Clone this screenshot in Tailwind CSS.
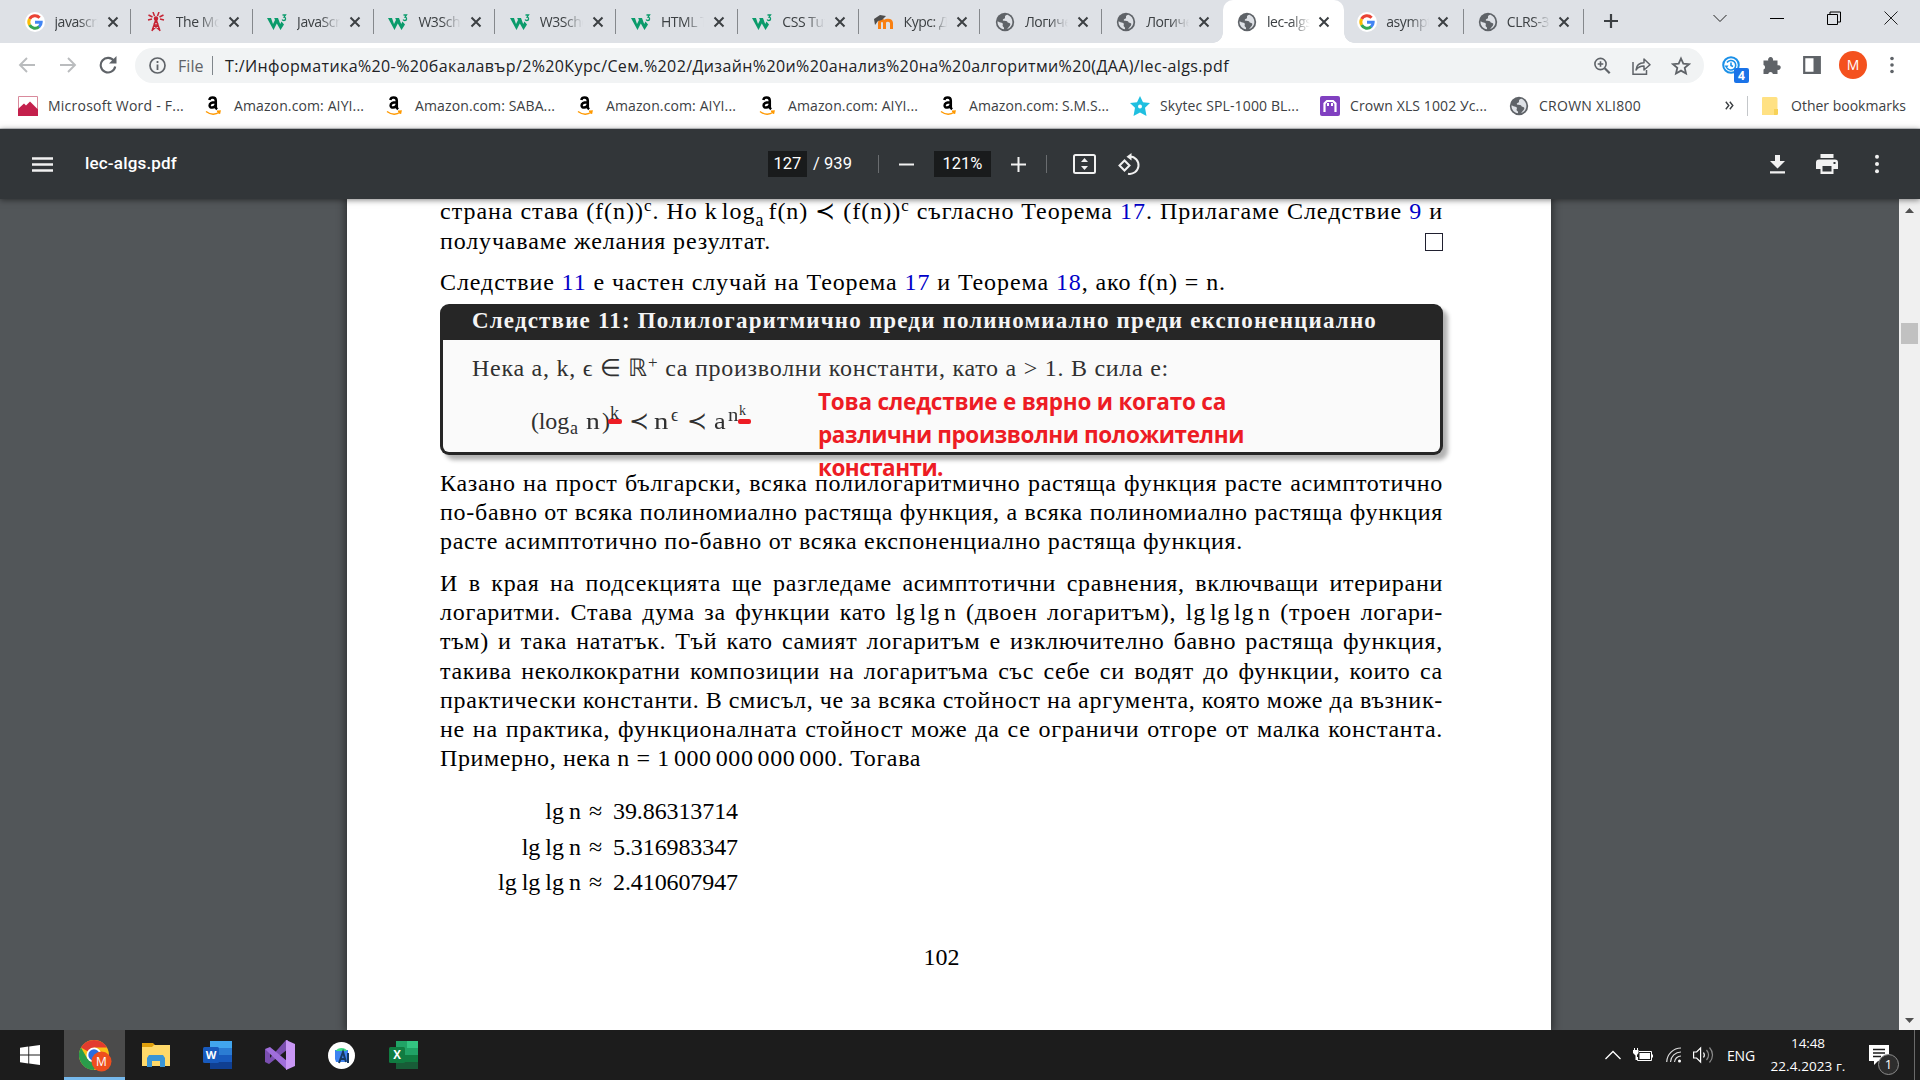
<!DOCTYPE html>
<html lang="bg">
<head>
<meta charset="utf-8">
<title>lec-algs.pdf</title>
<script src="https://cdn.jsdelivr.net/npm/@tailwindcss/browser@4"></script>
</head>
<body class="w-[1920px] h-[1080px] overflow-hidden flex flex-col bg-white font-['Open_Sans','Noto_Sans',sans-serif] text-[#3c4043]">

<svg class="hidden">
  <symbol id="x" viewBox="0 0 12 12"><path d="M1.5 1.5l9 9M10.500 1.500l-9 9" stroke="#3c4043" stroke-width="2" fill="none"/></symbol>
  <symbol id="g" viewBox="0 0 20 20"><circle cx="10" cy="10" r="10" fill="#fff"/><g fill="none" stroke-width="3"><path d="M14.600 5.700A6.200 6.200 0 0 0 4.600 7" stroke="#ea4335"/><path d="M4.600 7a6.300 6.300 0 0 0 0 6" stroke="#fbbc05"/><path d="M4.600 13a6.200 6.200 0 0 0 9.600 1.700" stroke="#34a853"/><path d="M14 14.800c1.500-1.300 2.200-2.800 2.200-4.500H10" stroke="#4285f4"/></g></symbol>
  <symbol id="w3" viewBox="0 0 20 18"><path d="M0 5h4l2 6 2-4-.8-2H11l2.200 6 1.300-2.500 2.500 3L13.500 17 9.800 10.500 6.500 17z" fill="#0a9b6b"/><path d="M15.500 2h3l-1.500 2.200c2.300.2 2 3.300-.2 3.300-.8 0-1.400-.4-1.600-1" stroke="#0a9b6b" stroke-width="1.300" fill="none"/></symbol>
  <symbol id="globe" viewBox="0 0 20 20"><circle cx="10" cy="10" r="9.200" fill="#5f6368"/><path d="M12.500 2.800c-1.500.4-2.800 1-2.500 2.400.2 1-.7 1.500-1.500 1.700-1 .3-1 1.600 0 1.800 1.500.3 3.500-.3 4 1.300.3 1.200 1.500.8 2.300 1.200 1 .5.300 2.500-.6 3.300-.7.700-1.200 2-2.400 2.700 3.300-.8 5.600-3.700 5.600-7.200 0-3.200-2-6-4.900-7.200zM2.700 9.200c1 1 2.500 1.200 3.800 1.500 1.300.3 1.700 1.300 1.200 2.400-.4 1 .3 1.700 1 2.200.5.500.4 1.400.2 2C5.500 16.800 2.500 13.800 2.500 10z" fill="#dee1e6"/></symbol>
  <symbol id="amz" viewBox="0 0 16 20"><path d="M1 15.500c4.500 3.300 9.500 3.300 13.500.5M12 15.200l3-.2-.6 2.800" stroke="#ff9900" stroke-width="1.500" fill="none"/><path d="M10.800 12.500V4.700C10.800 2.500 9.500 1.600 7.600 1.600 5.800 1.600 4.600 2.500 4.300 4M9.900 6.300C6.500 6.300 4.600 7.300 4.600 9.400c0 3.200 5 2.800 6.100-.5M10.500 11c.3 1 1 1.700 1.600 2.200" stroke="#000" stroke-width="2.500" fill="none"/></symbol>
  <symbol id="dots" viewBox="0 0 6 20"><circle cx="3" cy="2.800" r="2"/><circle cx="3" cy="10" r="2"/><circle cx="3" cy="17.200" r="2"/></symbol>
</svg>

<!-- Tab strip -->
<div class="h-[43px] shrink-0 bg-[#dee1e6] flex text-[14px] tracking-[-0.45px] pl-[10px]">
  <div class="w-[121.300px] shrink-0 flex items-center relative pl-[14.500px]"><svg class="w-5 h-5 shrink-0"><use href="#g"/></svg><span class="ml-[10px] w-[43px] overflow-hidden whitespace-nowrap [mask-image:linear-gradient(90deg,#000_55%,transparent)]">javascript</span><svg class="w-3 h-3 ml-[9px] shrink-0"><use href="#x"/></svg><i class="absolute right-0 top-[9px] w-px h-[25px] bg-[#85888c]"></i></div>
  <div class="w-[121.300px] shrink-0 flex items-center relative pl-[14.500px]"><svg class="w-5 h-5 shrink-0" viewBox="0 0 20 20" fill="none" stroke="#c62434" stroke-width="1.500"><path d="M10 7L6 19M10 7l4 12M7.500 13h5M6.500 18l6-5M13.500 18l-6-5M9 8l3 4M11 8l-3 4M2 8l4-1M2.500 3l4 2M7 0l1.500 4M13 0l-1.500 4M17.500 3l-4 2M18 8l-4-1"/><circle cx="10" cy="6.500" r="1.500" fill="#c62434"/></svg><span class="ml-[10px] w-[43px] overflow-hidden whitespace-nowrap [mask-image:linear-gradient(90deg,#000_55%,transparent)]">The Modern</span><svg class="w-3 h-3 ml-[9px] shrink-0"><use href="#x"/></svg><i class="absolute right-0 top-[9px] w-px h-[25px] bg-[#85888c]"></i></div>
  <div class="w-[121.300px] shrink-0 flex items-center relative pl-[14.500px]"><svg class="w-5 h-5 shrink-0"><use href="#w3"/></svg><span class="ml-[10px] w-[43px] overflow-hidden whitespace-nowrap [mask-image:linear-gradient(90deg,#000_55%,transparent)]">JavaScript</span><svg class="w-3 h-3 ml-[9px] shrink-0"><use href="#x"/></svg><i class="absolute right-0 top-[9px] w-px h-[25px] bg-[#85888c]"></i></div>
  <div class="w-[121.300px] shrink-0 flex items-center relative pl-[14.500px]"><svg class="w-5 h-5 shrink-0"><use href="#w3"/></svg><span class="ml-[10px] w-[43px] overflow-hidden whitespace-nowrap [mask-image:linear-gradient(90deg,#000_55%,transparent)]">W3Schools</span><svg class="w-3 h-3 ml-[9px] shrink-0"><use href="#x"/></svg><i class="absolute right-0 top-[9px] w-px h-[25px] bg-[#85888c]"></i></div>
  <div class="w-[121.300px] shrink-0 flex items-center relative pl-[14.500px]"><svg class="w-5 h-5 shrink-0"><use href="#w3"/></svg><span class="ml-[10px] w-[43px] overflow-hidden whitespace-nowrap [mask-image:linear-gradient(90deg,#000_55%,transparent)]">W3Schools</span><svg class="w-3 h-3 ml-[9px] shrink-0"><use href="#x"/></svg><i class="absolute right-0 top-[9px] w-px h-[25px] bg-[#85888c]"></i></div>
  <div class="w-[121.300px] shrink-0 flex items-center relative pl-[14.500px]"><svg class="w-5 h-5 shrink-0"><use href="#w3"/></svg><span class="ml-[10px] w-[43px] overflow-hidden whitespace-nowrap [mask-image:linear-gradient(90deg,#000_55%,transparent)]">HTML T</span><svg class="w-3 h-3 ml-[9px] shrink-0"><use href="#x"/></svg><i class="absolute right-0 top-[9px] w-px h-[25px] bg-[#85888c]"></i></div>
  <div class="w-[121.300px] shrink-0 flex items-center relative pl-[14.500px]"><svg class="w-5 h-5 shrink-0"><use href="#w3"/></svg><span class="ml-[10px] w-[43px] overflow-hidden whitespace-nowrap [mask-image:linear-gradient(90deg,#000_55%,transparent)]">CSS Tutorial</span><svg class="w-3 h-3 ml-[9px] shrink-0"><use href="#x"/></svg><i class="absolute right-0 top-[9px] w-px h-[25px] bg-[#85888c]"></i></div>
  <div class="w-[121.300px] shrink-0 flex items-center relative pl-[14.500px]"><svg class="w-5 h-5 shrink-0" viewBox="0 0 20 20"><path d="M5.500 17V11c0-3.500 5-3.500 5 0v6M10.500 11c0-3.500 6.500-4 7 0v6M5 9l4-1" stroke="#f98012" stroke-width="3" fill="none"/><path d="M0 7l6-4 6 1-4 4-4 1-3 4z" fill="#4d4d4d"/></svg><span class="ml-[10px] w-[43px] overflow-hidden whitespace-nowrap [mask-image:linear-gradient(90deg,#000_65%,transparent)]">Курс: ДАА</span><svg class="w-3 h-3 ml-[9px] shrink-0"><use href="#x"/></svg><i class="absolute right-0 top-[9px] w-px h-[25px] bg-[#85888c]"></i></div>
  <div class="w-[121.300px] shrink-0 flex items-center relative pl-[14.500px]"><svg class="w-5 h-5 shrink-0"><use href="#globe"/></svg><span class="ml-[10px] w-[43px] overflow-hidden whitespace-nowrap [mask-image:linear-gradient(90deg,#000_55%,transparent)]">Логичес</span><svg class="w-3 h-3 ml-[9px] shrink-0"><use href="#x"/></svg><i class="absolute right-0 top-[9px] w-px h-[25px] bg-[#85888c]"></i></div>
  <div class="w-[121.300px] shrink-0 flex items-center relative pl-[14.500px]"><svg class="w-5 h-5 shrink-0"><use href="#globe"/></svg><span class="ml-[10px] w-[43px] overflow-hidden whitespace-nowrap [mask-image:linear-gradient(90deg,#000_55%,transparent)]">Логичес</span><svg class="w-3 h-3 ml-[9px] shrink-0"><use href="#x"/></svg></div>
  <div class="w-[121.300px] shrink-0 flex items-center relative pl-[14px] bg-white rounded-t-[10px]"><i class="absolute -left-[10px] bottom-0 w-[10px] h-[10px] bg-[radial-gradient(circle_at_0_0,#dee1e6_9.500px,#fff_10px)]"></i><i class="absolute -right-[10px] bottom-0 w-[10px] h-[10px] bg-[radial-gradient(circle_at_100%_0,#dee1e6_9.500px,#fff_10px)]"></i><svg class="w-5 h-5 shrink-0"><use href="#globe"/></svg><span class="ml-[10px] w-[43px] overflow-hidden whitespace-nowrap [mask-image:linear-gradient(90deg,#000_55%,transparent)]">lec-algs.pdf</span><svg class="w-3 h-3 ml-[8px] shrink-0"><use href="#x"/></svg></div>
  <div class="w-[119.500px] shrink-0 flex items-center relative pl-[13px]"><svg class="w-5 h-5 shrink-0"><use href="#g"/></svg><span class="ml-[9px] w-[43px] overflow-hidden whitespace-nowrap [mask-image:linear-gradient(90deg,#000_55%,transparent)]">asymptotic</span><svg class="w-3 h-3 ml-[8px] shrink-0"><use href="#x"/></svg><i class="absolute right-0 top-[9px] w-px h-[25px] bg-[#85888c]"></i></div>
  <div class="w-[120px] shrink-0 flex items-center relative pl-[14px]"><svg class="w-5 h-5 shrink-0"><use href="#globe"/></svg><span class="ml-[9px] w-[43px] overflow-hidden whitespace-nowrap [mask-image:linear-gradient(90deg,#000_60%,transparent)]">CLRS-3</span><svg class="w-3 h-3 ml-[8px] shrink-0"><use href="#x"/></svg><i class="absolute right-0 top-[9px] w-px h-[25px] bg-[#85888c]"></i></div>
  <svg class="w-4 h-4 mt-[13px] ml-[19.500px]" viewBox="0 0 16 16"><path d="M8 1v14M1 8h14" stroke="#3c4043" stroke-width="2.200"/></svg>
  <div class="ml-auto mr-[22px] mt-[11px] flex text-black">
    <svg class="w-[14px] h-[14px] mr-[43px]" viewBox="0 0 14 14" fill="none" stroke="#222"><path d="M.5 4L7 10.500 13.500 4"/></svg>
    <svg class="w-[14px] h-[14px] mr-[43px]" viewBox="0 0 14 14" fill="none" stroke="#000"><path d="M0 7.500h14"/></svg>
    <svg class="w-[14px] h-[14px] mr-[43px]" viewBox="0 0 14 14" fill="none" stroke="#000"><path d="M.5 3.500h10v10H.5zM3 3V1h10.500v10H11"/></svg>
    <svg class="w-[14px] h-[14px]" viewBox="0 0 14 14" fill="none" stroke="#222"><path d="M.5.5l13 13M13.500.5l-13 13"/></svg>
  </div>
</div>

<!-- Toolbar -->
<div class="h-[47px] shrink-0 flex pl-[18px]">
  <svg class="w-[18px] h-[18px] mt-[13px]" viewBox="0 0 18 18" fill="none" stroke="#babcbe" stroke-width="1.900"><path d="M17 9H2M9 2L2 9l7 7"/></svg>
  <svg class="w-[18px] h-[18px] mt-[13px] ml-[23px]" viewBox="0 0 18 18" fill="none" stroke="#babcbe" stroke-width="1.900"><path d="M1 9h15M9 2l7 7-7 7"/></svg>
  <svg class="w-[18px] h-[18px] mt-[13px] ml-[22px]" viewBox="0 0 18 18"><path d="M15 5A7.300 7.300 0 1 0 16.200 10.500" fill="none" stroke="#5f6368" stroke-width="2.100"/><path d="M17.500 0v7.500H10z" fill="#5f6368"/></svg>
  <div class="ml-[18px] mt-[5px] h-[35px] w-[1569px] rounded-full bg-[#f1f3f4] flex items-center pl-[14px] text-[16px] relative">
    <svg class="w-[17px] h-[17px]" viewBox="0 0 17 17"><circle cx="8.500" cy="8.500" r="7.500" fill="none" stroke="#5f6368" stroke-width="1.700"/><path d="M8.500 7.500V13M8.500 4v2" stroke="#5f6368" stroke-width="1.800"/></svg>
    <span class="ml-[12px] w-[26px] text-[#5f6368]"><span class="inline-block whitespace-nowrap" data-w="25.500">File</span></span>
    <i class="w-px h-[19px] bg-[#80868b] ml-[8px] mr-[12px]"></i>
    <span class="inline-block whitespace-nowrap text-[#202124]" data-w="1004">T:/Информатика%20-%20бакалавър/2%20Курс/Сем.%202/Дизайн%20и%20анализ%20на%20алгоритми%20(ДАА)/lec-algs.pdf</span>
    <div class="ml-auto mr-[13px] flex gap-[20px] items-center">
      <svg class="w-[18px] h-[18px]" viewBox="0 0 18 18" fill="none" stroke="#5f6368" stroke-width="1.600"><circle cx="7.500" cy="7" r="5.600"/><path d="M11.700 11.200l5 5" stroke-width="2.200"/><path d="M7.500 4.200v5.600M4.700 7h5.600"/></svg>
      <svg class="w-5 h-5" viewBox="0 0 20 20" fill="none" stroke="#5f6368" stroke-width="1.500"><path d="M2 6v12.200h13.500V14"/><path d="M5 14c.5-5 3.500-7.200 8-7.200V3l6 5.700-6 5.300v-4c-3.500 0-6 1-8 4z" stroke-linejoin="round"/></svg>
      <svg class="w-5 h-5" viewBox="0 0 20 20" fill="none" stroke="#5f6368" stroke-width="1.800"><path d="M10 2.500l2.300 5.200 5.700.5-4.300 3.700 1.300 5.600L10 14.600l-5 2.900 1.300-5.600L2 8.200l5.700-.5z"/></svg>
    </div>
  </div>
  <div class="ml-[18px] mt-[13px] w-[28px] relative">
    <svg class="w-[18px] h-[18px]" viewBox="0 0 18 18" fill="none" stroke="#1a90e8" stroke-width="2"><circle cx="9" cy="9" r="7.800"/><path d="M5 6.500A4.800 4.800 0 1 1 5 12M9 6.500V9.500l2 1" stroke-width="1.600"/><path d="M2.500 9.500h4l-2 3z" fill="#1a90e8" stroke="none"/></svg>
    <span class="absolute left-[12px] top-[12px] w-[15px] h-[15px] rounded-[2px] bg-[#1a73e8] text-white text-[12px] leading-[15px] text-center font-bold">4</span>
  </div>
  <svg class="w-5 h-5 mt-[12px] ml-[12px]" viewBox="0 0 20 20" fill="#5f6368"><path d="M1.500 5.500h4.800a2.500 2.500 0 1 1 4.600 0h4.600v4.800a2.400 2.400 0 1 1 0 4.500V19h-4.600a2.400 2.400 0 0 0-4.700 0H1.500v-4.600a2.400 2.400 0 0 0 0-4.500z"/></svg>
  <svg class="w-[18px] h-[18px] mt-[13px] ml-[21px]" viewBox="0 0 18 18"><path d="M1.200 1.200h15.600v15.600H1.200z" fill="#fff" stroke="#5f6368" stroke-width="2.200"/><path d="M10.500 1H17v16h-6.500z" fill="#5f6368"/></svg>
  <div class="ml-[18px] mt-[8px] w-7 h-7 rounded-full bg-[#f4511e] text-white text-[14px] leading-7 text-center">M</div>
  <svg class="w-[6px] h-[18px] mt-[13px] ml-[22px]" fill="#5f6368"><use href="#dots"/></svg>
</div>

<!-- Bookmarks -->
<div class="h-[39px] shrink-0 flex pl-[18px] text-[14px] border-b border-[#cfd1d4] pb-[7px]">
  <div class="w-[187px] shrink-0 flex items-center"><svg class="w-5 h-5" viewBox="0 0 20 20"><path d="M.5.500h19v19H.500z" fill="#fff" stroke="#d98a9c"/><path d="M0 13l6-5.500 2 2 4-4 8 8V20H0z" fill="#c4204c"/></svg><span class="ml-[10px] inline-block whitespace-nowrap" data-w="136">Microsoft Word - F...</span></div>
  <div class="w-[181px] shrink-0 flex items-center"><svg class="w-4 h-5"><use href="#amz"/></svg><span class="ml-[13px] inline-block whitespace-nowrap" data-w="130">Amazon.com: AIYI...</span></div>
  <div class="w-[191px] shrink-0 flex items-center"><svg class="w-4 h-5"><use href="#amz"/></svg><span class="ml-[13px] inline-block whitespace-nowrap" data-w="140">Amazon.com: SABA...</span></div>
  <div class="w-[182px] shrink-0 flex items-center"><svg class="w-4 h-5"><use href="#amz"/></svg><span class="ml-[13px] inline-block whitespace-nowrap" data-w="130">Amazon.com: AIYI...</span></div>
  <div class="w-[181px] shrink-0 flex items-center"><svg class="w-4 h-5"><use href="#amz"/></svg><span class="ml-[13px] inline-block whitespace-nowrap" data-w="130">Amazon.com: AIYI...</span></div>
  <div class="w-[190px] shrink-0 flex items-center"><svg class="w-4 h-5"><use href="#amz"/></svg><span class="ml-[13px] inline-block whitespace-nowrap" data-w="140">Amazon.com: S.M.S...</span></div>
  <div class="w-[190px] shrink-0 flex items-center"><svg class="w-5 h-5" viewBox="0 0 20 20"><path d="M10 0l3 6.200 7 .8-5 4.800L16.500 20 10 16.500 3.500 20 5 11.800 0 7l7-.8z" fill="#1fbfe0"/><circle cx="10" cy="10.500" r="2" fill="#fff"/></svg><span class="ml-[10px] inline-block whitespace-nowrap" data-w="139">Skytec SPL-1000 BL...</span></div>
  <div class="w-[189px] shrink-0 flex items-center"><svg class="w-5 h-5" viewBox="0 0 20 20"><rect width="20" height="20" rx="2" fill="#8040c0"/><path d="M4.500 16V7.500L7 5h6l2.500 2.500V16" stroke="#fff" stroke-width="2.200" fill="none"/><path d="M8 7v3M12 7v3" stroke="#fff" stroke-width="2"/></svg><span class="ml-[10px] inline-block whitespace-nowrap" data-w="137">Crown XLS 1002 Ус...</span></div>
  <div class="w-[216px] shrink-0 flex items-center"><svg class="w-5 h-5"><use href="#globe"/></svg><span class="ml-[10px] inline-block whitespace-nowrap" data-w="102">CROWN XLI800</span></div>
  <div class="flex items-center"><svg class="w-[9px] h-[9px]" viewBox="0 0 9 9" fill="none" stroke="#3c4043" stroke-width="1.400"><path d="M.8.8l3 3.700-3 3.700M4.800.8l3 3.700-3 3.700"/></svg><i class="w-px h-5 bg-[#c4c7ca] ml-[13px] mr-[14px]"></i><svg class="w-[17px] h-[18px]" viewBox="0 0 17 18"><path d="M1 0h13a1.500 1.500 0 0 1 1.500 1.500V18H0V1a1 1 0 0 1 1-1z" fill="#ffe183"/><path d="M12 12h4v5l-1 1h-3z" fill="#f7d257"/></svg><span class="ml-[12px] inline-block whitespace-nowrap" data-w="115">Other bookmarks</span></div>
</div>

<!-- PDF viewer toolbar -->
<div class="h-[70px] shrink-0 bg-[#323639] flex items-center text-white font-[Roboto] text-[16.500px] relative z-10 shadow-[0_1px_6px_rgba(0,0,0,0.500)] pl-[32px]">
  <svg class="w-[21px] h-[15px]" viewBox="0 0 21 15" stroke="#f1f1f1" stroke-width="2.400"><path d="M0 1.500h21M0 7.500h21M0 13.500h21"/></svg>
  <div class="ml-[32px] w-[683px] font-medium text-[17px]"><span class="inline-block whitespace-nowrap" data-w="92">lec-algs.pdf</span></div>
  <div class="w-[39px] h-[26px] bg-[#191b1c] leading-[26px] text-center">127</div>
  <div class="ml-[6px] w-[65px]"><span class="inline-block whitespace-nowrap" data-w="39">/ 939</span></div>
  <i class="w-px h-[18px] bg-[#6a6d70]"></i>
  <svg class="w-[15px] h-[15px] ml-[20px]" viewBox="0 0 15 15" stroke="#f1f1f1" stroke-width="2"><path d="M0 7.500h15"/></svg>
  <div class="w-[57px] h-[26px] bg-[#191b1c] leading-[26px] text-center ml-[20px]">121%</div>
  <svg class="w-[15px] h-[15px] ml-[20px]" viewBox="0 0 15 15" stroke="#f1f1f1" stroke-width="2"><path d="M0 7.500h15M7.500 0v15"/></svg>
  <i class="w-px h-[18px] bg-[#6a6d70] ml-[20px]"></i>
  <svg class="w-[23px] h-[20px] ml-[26px]" viewBox="0 0 23 20"><rect x="1" y="1" width="21" height="18" rx="1.500" fill="none" stroke="#f1f1f1" stroke-width="2"/><path d="M11.500 4l3.500 4H8zM11.500 16l3.500-4H8z" fill="#f1f1f1"/></svg>
  <svg class="w-[23px] h-[23px] ml-[22px]" viewBox="0 0 23 23" fill="none" stroke="#f1f1f1" stroke-width="2"><path d="M6.500 7.500L1.500 12.500 6.500 17.500l5-5zM12 3.500a8.700 8.700 0 1 1-2 17.200"/><path d="M13.500 0v7.500L8.500 3.700z" fill="#f1f1f1" stroke="none"/></svg>
  <div class="ml-auto mr-[40px] flex items-center">
    <svg class="w-[15px] h-[19px]" viewBox="0 0 15 19" fill="#f1f1f1"><path d="M5 0h5v6h5l-7.500 7.500L0 6h5zM0 16.200h15V18.500H0z"/></svg>
    <svg class="w-[22px] h-[20px] ml-[31px] mr-[36px]" viewBox="0 0 22 20"><path d="M4.500 0h13v4h-13zM3 5.500h16a3 3 0 0 1 3 3V15h-4.500v5h-13v-5H0V8.500a3 3 0 0 1 3-3z" fill="#f1f1f1"/><path d="M6.500 12h9v5.500h-9zM17.500 8h2v2h-2z" fill="#323639"/></svg>
    <svg class="w-[6px] h-[20px]" fill="#f1f1f1"><use href="#dots"/></svg>
  </div>
</div>

<!-- Document -->
<main class="h-[831px] shrink-0 bg-[#525659] flex overflow-hidden">
  <div class="ml-[347px] w-[1204px] h-[831px] bg-white shadow-[0_0_8px_2px_rgba(0,0,0,0.450)] pl-[93px] font-['Liberation_Serif',serif] text-[24px] leading-[29.200px] text-black whitespace-nowrap overflow-hidden relative">
    <div class="-mt-[1.600px] h-[30px]"><span class="inline-block" data-w="1003">страна става (f(n))<span class="text-[17px] leading-0 align-[8px]">c</span>. Но k<span class="ml-1">log</span><span class="text-[18px] leading-0 align-[-7px] mr-1">a</span>f(n) ≺ (f(n))<span class="text-[17px] leading-0 align-[8px]">c</span> съгласно Теорема <span class="text-[#0000c8]">17</span>. Прилагаме Следствие <span class="text-[#0000c8]">9</span> и</span></div>
    <div class="h-[29.200px] flex w-[1003px] justify-between"><span class="inline-block" data-w="331">получаваме желания резултат.</span><i class="w-[18px] h-[18px] border border-[#202030] mt-[6px]"></i></div>
    <div class="mt-[11.200px] h-[29.200px]"><span class="inline-block" data-w="786">Следствие <span class="text-[#0000c8]">11</span> е частен случай на Теорема <span class="text-[#0000c8]">17</span> и Теорема <span class="text-[#0000c8]">18</span>, ако f(n) = n.</span></div>
    <section class="mt-[7px] w-[1003px] h-[151px] rounded-[9px] bg-[#262626] shadow-[5px_5px_4px_rgba(0,0,0,0.300)] flex flex-col pb-[3px] px-[3px]">
      <h2 class="h-[36.500px] pl-[29px] text-[23px] leading-[34px] font-bold text-[#f5f5f5]"><span class="inline-block" data-w="905">Следствие 11: Полилогаритмично преди полиномиално преди експоненциално</span></h2>
      <div class="flex-1 bg-[#fafafa] rounded-b-[6px] pl-[29px] pt-[13.500px] text-[#303030]">
        <p class="h-[53.300px]"><span class="inline-block" data-w="697">Нека a, k, ϵ ∈ ℝ<span class="text-[17px] leading-0 align-[8px]">+</span> са произволни константи, като a &gt; 1. В сила е:</span></p>
        <p class="pl-[59px] flex h-[29.200px]"><span class="w-[39px] shrink-0 inline-block"><span class="inline-block" data-w="38">(log</span></span><span class="text-[18px] w-[16px] mt-[7px]">a</span><span class="w-[16px] scale-x-115 origin-left">n</span><span class="w-[8px]">)</span><span class="w-[19px] text-[18px] relative -top-[8px]">k<i class="absolute -left-[2px] top-[20px] w-[14px] h-[5px] rounded-[2px] bg-[#ed1c24]"></i></span><span class="w-[25px]">≺</span><span class="w-[17px] scale-x-120 origin-left">n</span><span class="w-[16px] text-[18px] relative -top-[6px]">ϵ</span><span class="w-[27px]">≺</span><span class="w-[14px] scale-x-110 origin-left">a</span><span class="w-[11px] text-[18px] relative -top-[6px] scale-x-115 origin-left">n</span><span class="text-[14px] relative -top-[11px]">k<i class="absolute -left-[1px] top-[23px] w-[13px] h-[5px] rounded-[2px] bg-[#ed1c24]"></i></span></p>
      </div>
    </section>
    <div class="mt-[14.100px]">
      <p class="h-[29.200px]"><span class="inline-block" data-j="1003">Казано на прост български, всяка полилогаритмично растяща функция расте асимптотично</span></p>
      <p class="h-[29.200px]"><span class="inline-block" data-j="1003">по-бавно от всяка полиномиално растяща функция, а всяка полиномиално растяща функция</span></p>
      <p class="h-[29.200px]"><span class="inline-block" data-w="803" id="measure">расте асимптотично по-бавно от всяка експоненциално растяща функция.</span></p>
    </div>
    <div class="mt-[12.400px]">
      <p class="h-[29.200px]"><span class="inline-block" data-j="1003">И в края на подсекцията ще разгледаме асимптотични сравнения, включващи итерирани</span></p>
      <p class="h-[29.200px]"><span class="inline-block" data-j="1003">логаритми. Става дума за функции като lg<span class="ml-1">lg</span><span class="ml-1">n</span> (двоен логаритъм), lg<span class="ml-1">lg</span><span class="ml-1">lg</span><span class="ml-1">n</span> (троен логари-</span></p>
      <p class="h-[29.200px]"><span class="inline-block" data-j="1003">тъм) и така нататък. Тъй като самият логаритъм е изключително бавно растяща функция,</span></p>
      <p class="h-[29.200px]"><span class="inline-block" data-j="1003">такива неколкократни композиции на логаритъма със себе си водят до функции, които са</span></p>
      <p class="h-[29.200px]"><span class="inline-block" data-j="1003">практически константи. В смисъл, че за всяка стойност на аргумента, която може да възник-</span></p>
      <p class="h-[29.200px]"><span class="inline-block" data-j="1003">не на практика, функционалната стойност може да се ограничи отгоре от малка константа.</span></p>
      <p class="h-[29.200px]"><span class="inline-block" data-w="481">Примерно, нека n = 1<span class="ml-1">000</span><span class="ml-1">000</span><span class="ml-1">000</span><span class="ml-1">000</span>. Тогава</span></p>
    </div>
    <div class="mt-[24px] grid grid-cols-[141px_32px_auto] auto-rows-[35.300px]">
      <span class="text-right">lg<span class="ml-[5px]">n</span></span><span class="pl-[8px]">≈</span><span><span class="inline-block" data-w="125">39.86313714</span></span>
      <span class="text-right">lg<span class="ml-[5px]">lg</span><span class="ml-[5px]">n</span></span><span class="pl-[8px]">≈</span><span><span class="inline-block" data-w="125">5.316983347</span></span>
      <span class="text-right">lg<span class="ml-[5px]">lg</span><span class="ml-[5px]">lg</span><span class="ml-[5px]">n</span></span><span class="pl-[8px]">≈</span><span><span class="inline-block" data-w="125">2.410607947</span></span>
    </div>
    <div class="mt-[40px] w-[1003px] text-center">102</div>
    <div class="absolute left-[471px] top-[186px] font-['Open_Sans','Noto_Sans',sans-serif] font-bold text-[22.500px] leading-[33.200px] text-[#ed1c24]"><span class="inline-block" data-w="408">Това следствие е вярно и когато са</span><br><span class="inline-block" data-w="426">различни произволни положителни</span><br><span class="inline-block" data-w="125">константи.</span></div>
  </div>
  <div class="ml-auto w-[21px] bg-[#f0f0f0] flex flex-col items-center justify-between pt-[9px] pb-[7px] relative">
    <svg class="w-[9px] h-[5px]" viewBox="0 0 9 5"><path d="M0 5L4.500 0 9 5z" fill="#505050"/></svg>
    <i class="absolute left-[2px] top-[124px] w-[17px] h-[21px] bg-[#c1c1c1]"></i>
    <svg class="w-[9px] h-[5px]" viewBox="0 0 9 5"><path d="M0 0l4.500 5L9 0z" fill="#505050"/></svg>
  </div>
</main>

<!-- Taskbar -->
<footer class="h-[50px] shrink-0 bg-[#1c1c1c] flex items-center text-white">
  <svg class="w-5 h-5 ml-[20px]" viewBox="0 0 20 20" fill="#fff"><path d="M0 2.800L8.300 1.600V9.500H0zM9.200 1.500L20 0v9.500H9.200zM0 10.400h8.300v8L0 17.300zM9.200 10.400H20V20L9.200 18.500z"/></svg>
  <div class="ml-[24px] w-[61px] h-[50px] bg-[#4b4b4b] border-b-[3px] border-[#76b9ed] flex pl-[15px] pt-[9px]">
    <svg class="w-[33px] h-[33px]" viewBox="0 0 33 33"><circle cx="15" cy="16" r="15" fill="#fbc116"/><path d="M15 16L2 8.500A15 15 0 0 1 28 8.500H15z" fill="#e33b2e"/><path d="M2 8.500A15 15 0 0 0 15 31l6.500-11-6.500-4-6.500 4z" fill="#2a9d4b"/><circle cx="15" cy="16" r="7.500" fill="#fff"/><circle cx="15" cy="16" r="5.700" fill="#2b6de0"/><circle cx="22.500" cy="22.500" r="10" fill="#ee4e1e"/><text x="22.500" y="27" font-size="12" fill="#fff" text-anchor="middle">M</text></svg>
  </div>
  <svg class="w-7 h-6 ml-[17px]" viewBox="0 0 28 24"><path d="M0 0h11l2 2v3H0z" fill="#e0a00c"/><path d="M0 4h10l2-2h16v21H0z" fill="#ffd969"/><path d="M5 24V15l2-3h14l2 3v9h-5v-6h-8v6z" fill="#3a95d6"/></svg>
  <svg class="w-[29px] h-[28px] ml-[33px]" viewBox="0 0 29 28"><path d="M7 0h22v7H7z" fill="#41a5ee"/><path d="M7 7h22v7H7z" fill="#2b7cd3"/><path d="M7 14h22v7H7z" fill="#185abd"/><path d="M7 21h22v7H7z" fill="#103f91"/><rect y="6" width="16" height="16" rx="1.500" fill="#185abd"/><text x="8" y="18" font-size="11" font-weight="700" fill="#fff" text-anchor="middle">W</text></svg>
  <svg class="w-[30px] h-[30px] ml-[33px]" viewBox="0 0 30 30"><path d="M0 9v13l4 2L23 9V0h-2L5 18V11z" fill="#7b4fb0"/><path d="M0 9l5-2 17 14v9L4 13z" fill="#a06edb"/><path d="M21 0l9 4v22l-9 4z" fill="#c997f5"/></svg>
  <svg class="w-[27px] h-[27px] ml-[33px]" viewBox="0 0 27 27"><circle cx="13.500" cy="13.500" r="13.500" fill="#fff"/><path d="M7 8h13v11l-3 1H8l-1-3z" fill="#3d82f0"/><path d="M8 9c1-4 10-4 11 0z" fill="#3ddc84"/><path d="M11 21l4-11 3 10M13 17h4M20 11v10" stroke="#163a63" stroke-width="2" fill="none"/></svg>
  <svg class="w-[29px] h-[28px] ml-[34px]" viewBox="0 0 29 28"><path d="M7 0h22v28H7z" fill="#21a366"/><path d="M18 0h11v7H18z" fill="#33c481"/><path d="M7 14h22v7H7z" fill="#107c41"/><path d="M7 21h22v7H7z" fill="#185c37"/><rect y="6" width="16" height="16" rx="1.500" fill="#107c41"/><text x="8" y="18" font-size="11.500" font-weight="700" fill="#fff" text-anchor="middle">X</text></svg>
  <div class="ml-auto flex items-center h-full">
    <svg class="w-[16px] h-[10px]" viewBox="0 0 16 10" fill="none" stroke="#fff" stroke-width="1.300"><path d="M.5 9L8 1.500 15.500 9"/></svg>
    <svg class="w-[20px] h-[14px] ml-[12px]" viewBox="0 0 20 14"><path d="M6 3.500h12.500v9H4.500V9" fill="none" stroke="#fff"/><path d="M6.500 5H17v6H6.500zM19 6.500h1v3h-1zM0 2h5.500v3L4 7v5H2.500V7.500L0 5zM1 0h1v2H1zM4 0h1v2H4z" fill="#fff"/></svg>
    <svg class="w-[16px] h-[16px] ml-[13px]" viewBox="0 0 16 16" fill="none" stroke="#ddd" stroke-width="1.200"><path d="M.7 15A14.500 14.500 0 0 1 15 1M4.500 15A10.500 10.500 0 0 1 15 5M8.500 15A6.500 6.500 0 0 1 15 9"/><circle cx="13.500" cy="14" r="1.500" fill="#fff" stroke="none"/></svg>
    <svg class="w-[21px] h-[18px] ml-[11px]" viewBox="0 0 21 18" fill="none" stroke="#fff" stroke-width="1.200"><path d="M.6 6h3l4-4v14l-4-4h-3zM10.500 6.500c1 1.500 1 3.500 0 5"/><path d="M13.500 4c2.500 3 2.500 7 0 10M16.500 1.500c4 4.500 4 10.500 0 15" stroke="#8a8a8a"/></svg>
    <div class="ml-[13px] w-[29px] text-[14px]"><span class="inline-block" data-w="28">ENG</span></div>
    <div class="ml-[14px] w-[76px] flex flex-col items-center text-[13.500px] leading-[23.500px] whitespace-nowrap"><span class="inline-block" data-w="34">14:48</span><span class="inline-block" data-w="75">22.4.2023 г.</span></div>
    <div class="ml-[23px] w-[45px] relative h-[20px]">
      <svg class="w-5 h-5" viewBox="0 0 20 20"><path d="M0 0h20v16H9l-4 4v-4H0z" fill="#fff"/><path d="M4 4.500h12M4 8h12M4 11.500h8" stroke="#1c1c1c" stroke-width="1.300"/></svg>
      <span class="absolute left-[9px] top-[9px] w-[21px] h-[21px] rounded-full border border-[#8c8c8c] bg-[#2d2d2d] text-[13px] leading-[19px] text-center">1</span>
    </div>
    <i class="w-px h-full bg-[#6a6a6a] mr-[5px]"></i>
  </div>
</footer>

<script>
  // Spread each text run over its nominal width: data-w by letter spacing, data-j by word spacing.
  const width = el => el.getBoundingClientRect().width;
  function fit() {
    document.querySelectorAll('[data-w]').forEach(el => {
      el.style.letterSpacing = '';
      el.style.letterSpacing = (el.dataset.w - width(el)) / el.textContent.length + 'px';
    });
    const tracking = document.getElementById('measure').style.letterSpacing;
    document.querySelectorAll('[data-j]').forEach(el => {
      el.style.wordSpacing = '';
      el.style.letterSpacing = tracking;
      el.style.wordSpacing = (el.dataset.j - width(el)) / (el.textContent.split(' ').length - 1) + 'px';
    });
  }
  fit();
  addEventListener('load', fit);
  document.fonts.ready.then(fit);
  // The stylesheet may arrive after the first layout, so fit again when the body takes its size.
  new ResizeObserver(fit).observe(document.body);
  new ResizeObserver(fit).observe(document.querySelector('main'));
</script>
</body>
</html>
